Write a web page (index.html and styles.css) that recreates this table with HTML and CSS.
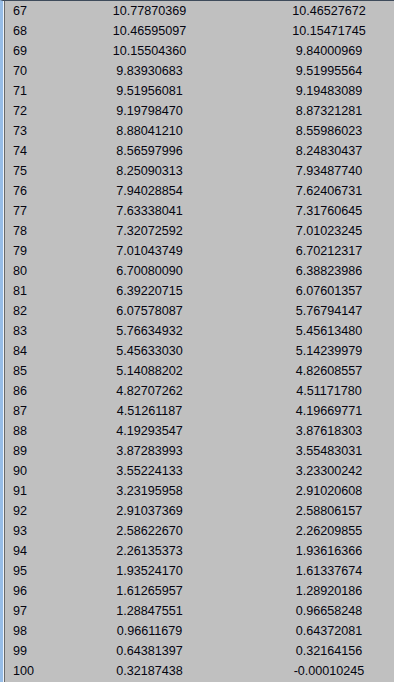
FILE: index.html
```html
<!DOCTYPE html>
<html>
<head>
<meta charset="utf-8">
<link rel="stylesheet" href="styles.css">
</head>
<body>
<div class="frame">
  <table class="grid">
    <colgroup><col class="c-idx"><col class="c-a"><col class="c-b"></colgroup>
    <tbody>
      <tr><td>67</td><td>10.77870369</td><td>10.46527672</td></tr>
      <tr><td>68</td><td>10.46595097</td><td>10.15471745</td></tr>
      <tr><td>69</td><td>10.15504360</td><td>9.84000969</td></tr>
      <tr><td>70</td><td>9.83930683</td><td>9.51995564</td></tr>
      <tr><td>71</td><td>9.51956081</td><td>9.19483089</td></tr>
      <tr><td>72</td><td>9.19798470</td><td>8.87321281</td></tr>
      <tr><td>73</td><td>8.88041210</td><td>8.55986023</td></tr>
      <tr><td>74</td><td>8.56597996</td><td>8.24830437</td></tr>
      <tr><td>75</td><td>8.25090313</td><td>7.93487740</td></tr>
      <tr><td>76</td><td>7.94028854</td><td>7.62406731</td></tr>
      <tr><td>77</td><td>7.63338041</td><td>7.31760645</td></tr>
      <tr><td>78</td><td>7.32072592</td><td>7.01023245</td></tr>
      <tr><td>79</td><td>7.01043749</td><td>6.70212317</td></tr>
      <tr><td>80</td><td>6.70080090</td><td>6.38823986</td></tr>
      <tr><td>81</td><td>6.39220715</td><td>6.07601357</td></tr>
      <tr><td>82</td><td>6.07578087</td><td>5.76794147</td></tr>
      <tr><td>83</td><td>5.76634932</td><td>5.45613480</td></tr>
      <tr><td>84</td><td>5.45633030</td><td>5.14239979</td></tr>
      <tr><td>85</td><td>5.14088202</td><td>4.82608557</td></tr>
      <tr><td>86</td><td>4.82707262</td><td>4.51171780</td></tr>
      <tr><td>87</td><td>4.51261187</td><td>4.19669771</td></tr>
      <tr><td>88</td><td>4.19293547</td><td>3.87618303</td></tr>
      <tr><td>89</td><td>3.87283993</td><td>3.55483031</td></tr>
      <tr><td>90</td><td>3.55224133</td><td>3.23300242</td></tr>
      <tr><td>91</td><td>3.23195958</td><td>2.91020608</td></tr>
      <tr><td>92</td><td>2.91037369</td><td>2.58806157</td></tr>
      <tr><td>93</td><td>2.58622670</td><td>2.26209855</td></tr>
      <tr><td>94</td><td>2.26135373</td><td>1.93616366</td></tr>
      <tr><td>95</td><td>1.93524170</td><td>1.61337674</td></tr>
      <tr><td>96</td><td>1.61265957</td><td>1.28920186</td></tr>
      <tr><td>97</td><td>1.28847551</td><td>0.96658248</td></tr>
      <tr><td>98</td><td>0.96611679</td><td>0.64372081</td></tr>
      <tr><td>99</td><td>0.64381397</td><td>0.32164156</td></tr>
      <tr><td>100</td><td>0.32187438</td><td>-0.00010245</td></tr>
    </tbody>
  </table>
</div>
</body>
</html>
```
FILE: styles.css
```css
html, body {
  margin: 0;
  padding: 0;
  width: 394px;
  height: 682px;
  overflow: hidden;
  background: #c0c0c0;
}
.frame {
  height: 681px;
  border-top: 1px solid #3e4b5b;
  border-left: 3px solid #98bde6;
  box-shadow: inset 1px 0 0 #eef4fb, inset 2px 0 0 #6a6a6a;
  padding-left: 2px;
  background: #c0c0c0;
  overflow: hidden;
}
.grid {
  border-collapse: collapse;
  table-layout: fixed;
  width: 419px;
  font-family: "Liberation Sans", Arial, sans-serif;
  font-size: 12.6px;
  color: #050510;
}
.c-idx { width: 60px; }
.c-a { width: 169px; }
.c-b { width: 190px; }
.grid td {
  height: 20px;
  padding: 0;
  line-height: 20px;
  text-align: center;
  white-space: nowrap;
}
.grid td:first-child {
  text-align: left;
  padding-left: 8px;
}
```
